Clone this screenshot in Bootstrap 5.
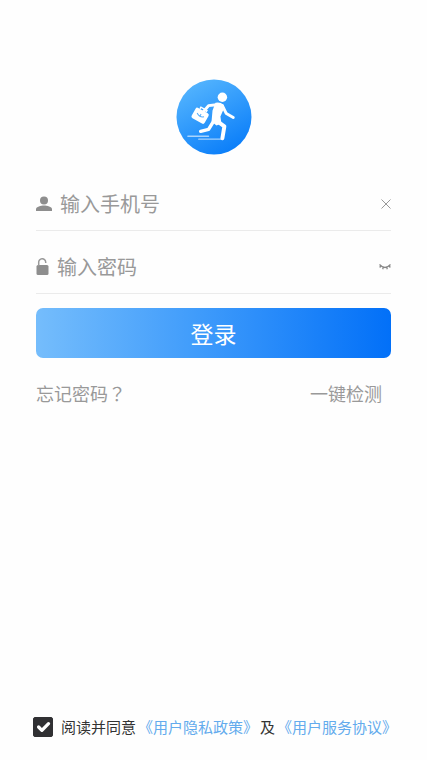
<!DOCTYPE html>
<html lang="zh-CN">
<head>
<meta charset="utf-8">
<meta name="viewport" content="width=device-width, initial-scale=1">
<title>登录</title>
<link href="https://cdn.jsdelivr.net/npm/bootstrap@5.3.0/dist/css/bootstrap.min.css" rel="stylesheet">
<style>
  body { font-family: "Noto Sans CJK SC", sans-serif; background: #fefefe; }
  .login-page { padding: 79px 36px 21px; }
  .brand-logo { width: 76px; height: 76px; }
  .field-row { height: 63px; padding-top: 10px; border-bottom: 1px solid #ebebeb; color: #999; }
  .first-row { margin-top: 13px; }
  .field-row input { font-size: 20px; line-height: 30px; color: #666; }
  .field-row input::placeholder { color: #999; opacity: 1; }
  .icon-btn { line-height: 0; color: #999; }
  .login-btn { height: 50px; margin-top: 14px; border-radius: 7px; font-size: 23px; line-height: 34px; color: #fff;
    background: linear-gradient(90deg, #75bdfc, #409cfb 45%, #0270f8); }
  .login-btn:hover { color: #fff; }
  .help-links { margin-top: 21px; padding-right: 9px; font-size: 18px; line-height: 28px; }
  .help-links a { color: #999; }
  .centered-mark { font-family: "Noto Sans CJK TC", sans-serif; }
  .agreement { gap: 8px; margin: 0 -3px; font-size: 15px; line-height: 24px; color: #333; }
  .agreement a { color: #63abed; }
  .agreement-text { gap: 2px; }
  .agreement .form-check-input { width: 20px; height: 20px; border-radius: 2px; border-color: #303033; }
  .agreement .form-check-input:checked { background-color: #303033; background-size: 22px 22px; }
</style>
<script src="https://cdn.jsdelivr.net/npm/bootstrap@5.3.0/dist/js/bootstrap.bundle.min.js" defer></script>
</head>
<body>
<main class="login-page d-flex flex-column min-vh-100">
  <svg class="brand-logo align-self-center" viewBox="0 0 77 77" role="img" aria-label="跑腿">
    <defs><linearGradient id="disc" x1="0.2" y1="0" x2="0.75" y2="1"><stop offset="0" stop-color="#56b6fe"/><stop offset="1" stop-color="#087cf9"/></linearGradient></defs>
    <circle cx="38.500" cy="38.500" r="38" fill="url(#disc)"/>
    <g fill="none" stroke="#fff" stroke-linecap="round" stroke-linejoin="round">
      <path d="M41 26 33 27 28 33" stroke-width="3"/>
      <path d="M47 27 51 35 58 39" stroke-width="3"/>
      <path d="M38 43 33 51 25 53" stroke-width="3.500"/>
      <path d="M42 43 49 48 47 60" stroke-width="4"/>
      <path d="M12 58h21M23 61h23" stroke-width="1.300" opacity=".6"/>
    </g>
    <circle cx="47" cy="18.500" r="4.800" fill="#fff"/>
    <path d="M40 24q5-1 8 2l1 3-4 9 1 7-5 2-5-4 1-11z" fill="#fff"/>
    <g transform="rotate(29 24 37)">
      <rect x="17" y="31" width="15" height="12" rx="2" fill="#fff"/>
      <path d="M21 31v-2h7v2" fill="none" stroke="#fff" stroke-width="1.500"/>
      <path d="M20.500 36q4 3 8 0M24.500 35v2.500" fill="none" stroke="#54adfc" stroke-width="1"/>
    </g>
  </svg>

  <form class="d-flex flex-column flex-grow-1">
    <div class="field-row first-row d-flex align-items-center">
      <svg class="me-2 flex-shrink-0" width="16" height="17" viewBox="0 0 16 17" fill="#8e8e8e" aria-hidden="true"><circle cx="8" cy="4.500" r="4"/><path d="M0 15v-2c0-2 5-3.500 8-3.500s8 1.500 8 3.500v2z"/></svg>
      <input class="form-control-plaintext p-0 flex-fill" type="tel" placeholder="输入手机号" aria-label="手机号">
      <button class="btn p-0 border-0 icon-btn" type="button" aria-label="清除"><svg width="10" height="10" viewBox="0 0 10 10" fill="none" stroke="currentColor"><path d="M.5.5l9 9m0-9l-9 9"/></svg></button>
    </div>
    <div class="field-row d-flex align-items-center">
      <svg class="me-2 flex-shrink-0" width="13" height="18" viewBox="0 0 13 18" fill="none" aria-hidden="true"><rect x=".5" y="7" width="12" height="10" rx="1.500" fill="#8e8e8e"/><path d="M2.700 8V4.500a3.500 3.500 0 0 1 7-.5v1" stroke="#999" stroke-width="1.500"/></svg>
      <input class="form-control-plaintext p-0 flex-fill" type="password" placeholder="输入密码" aria-label="密码">
      <button class="btn p-0 border-0 icon-btn" type="button" aria-label="显示密码"><svg width="12" height="8" viewBox="0 0 12 8" fill="none" stroke="#888" stroke-width="1.300"><path d="M.5 1.500q5.500 6 11 0M1.800 3 .7 4.500M4.300 4.300l-.6 2M7.700 4.300l.6 2M10.200 3l1.100 1.500"/></svg></button>
    </div>
    <button class="btn login-btn w-100 p-0 border-0" type="submit">登录</button>
    <div class="help-links d-flex justify-content-between">
      <a class="text-decoration-none" href="#forgot">忘记密码<span class="centered-mark" lang="zh-TW">？</span></a>
      <a class="text-decoration-none" href="#check">一键检测</a>
    </div>
    <div class="agreement d-flex align-items-center mt-auto">
      <input class="form-check-input m-0 flex-shrink-0" type="checkbox" id="agree" checked>
      <div class="agreement-text d-flex text-nowrap">
        <label for="agree">阅读并同意</label>
        <a class="text-decoration-none" href="#privacy">《用户隐私政策》</a>
        <span>及</span>
        <a class="text-decoration-none" href="#terms">《用户服务协议》</a>
      </div>
    </div>
  </form>
</main>
</body>
</html>
